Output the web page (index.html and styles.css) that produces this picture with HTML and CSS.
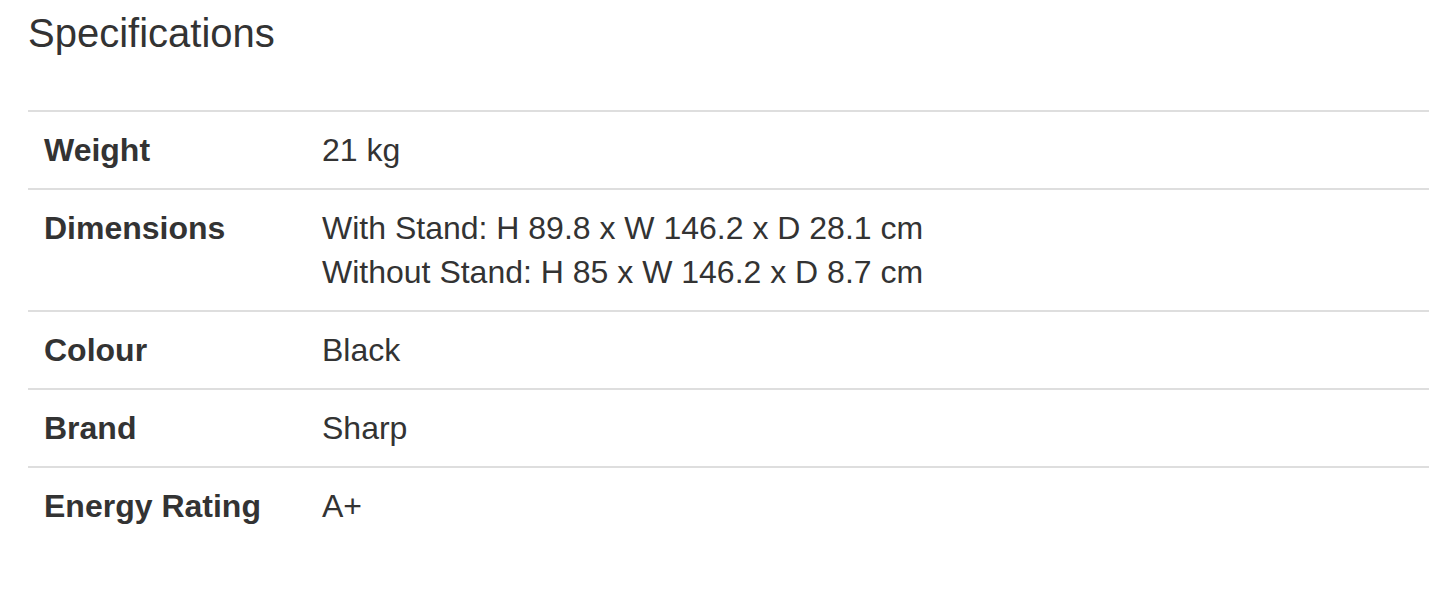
FILE: index.html
```html
<!DOCTYPE html>
<html>
<head>
<meta charset="utf-8">
<link rel="stylesheet" href="styles.css">
</head>
<body>
<section class="specs">
  <h2 class="specs-title">Specifications</h2>
  <div class="specs-table">
    <div class="spec-row">
      <div class="spec-label">Weight</div>
      <div class="spec-value">21 kg</div>
    </div>
    <div class="spec-row">
      <div class="spec-label">Dimensions</div>
      <div class="spec-value">With Stand: H 89.8 x W 146.2 x D 28.1 cm<br>Without Stand: H 85 x W 146.2 x D 8.7 cm</div>
    </div>
    <div class="spec-row">
      <div class="spec-label">Colour</div>
      <div class="spec-value">Black</div>
    </div>
    <div class="spec-row">
      <div class="spec-label">Brand</div>
      <div class="spec-value">Sharp</div>
    </div>
    <div class="spec-row">
      <div class="spec-label">Energy Rating</div>
      <div class="spec-value">A+</div>
    </div>
  </div>
</section>
</body>
</html>
```

FILE: styles.css
```css
html, body {
  margin: 0;
  padding: 0;
  background: #ffffff;
}
body {
  font-family: "Liberation Sans", Arial, sans-serif;
  color: #333333;
}
.specs {
  padding-left: 28px;
}
.specs-title {
  margin: 0 0 55px 0;
  padding-top: 11px;
  font-size: 40px;
  line-height: 44px;
  font-weight: normal;
  color: #333333;
}
.spec-row {
  display: grid;
  grid-template-columns: 278px 1fr;
  border-top: 2px solid #dedede;
}
.spec-label,
.spec-value {
  padding: 16px 16px;
  font-size: 32px;
  line-height: 44px;
}
.spec-label {
  font-weight: bold;
}
```
